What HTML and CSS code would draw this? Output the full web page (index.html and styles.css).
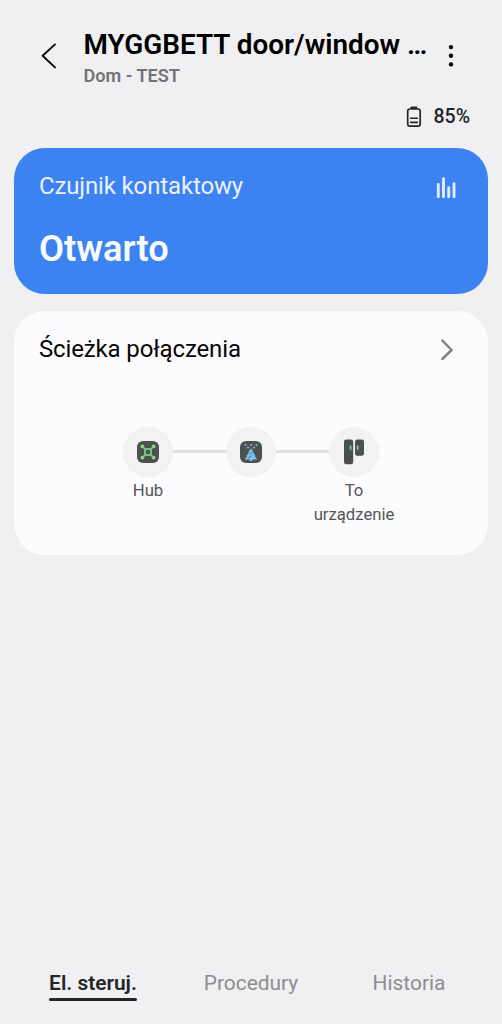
FILE: index.html
```html
<!DOCTYPE html>
<html lang="pl">
<head>
<meta charset="utf-8">
<title>MYGGBETT</title>
<link rel="stylesheet" href="styles.css">
</head>
<body>
<div class="screen">
  <header class="header">
    <svg class="back" width="16" height="28" viewBox="0 0 16 28" fill="none" stroke="#080808" stroke-width="1.9" stroke-linecap="round" stroke-linejoin="round"><path d="M14 2.4 1.6 13.8 14 25.4"/></svg>
    <div class="heading">
      <h1 class="title">MYGGBETT door/window …</h1>
      <div class="subtitle">Dom - TEST</div>
    </div>
    <svg class="more" width="6" height="24" viewBox="0 0 6 24" fill="#0a0a0a"><circle cx="3" cy="3.1" r="2.2"/><circle cx="3" cy="11.8" r="2.2"/><circle cx="3" cy="20.4" r="2.2"/></svg>
  </header>
  <div class="battery">
    <svg width="16" height="22" viewBox="0 0 16 22" fill="none" stroke="#252527"><path d="M5.6 1.8h4.6" stroke-width="2.6" stroke-linecap="round"/><rect x="1.7" y="3" width="12.5" height="17.2" rx="2.2" stroke-width="1.7"/><path d="M4.6 12.2h6.8M4.6 16.4h6.8" stroke-width="1.6" stroke-linecap="round"/></svg>
    <span>85%</span>
  </div>
  <section class="card status">
    <div class="row">
      <h2 class="card-title">Czujnik kontaktowy</h2>
      <svg class="bars" width="20" height="22" viewBox="0 0 20 22" fill="none" stroke="#e1ecfd" stroke-width="2.9" stroke-linecap="round"><path d="M2.3 7.4V19.8M7.5 1.8V19.8M12.7 10.6V19.8M18 6.8V19.8"/></svg>
    </div>
    <div class="state">Otwarto</div>
  </section>
  <section class="card route">
    <div class="row">
      <h2 class="card-title">Ścieżka połączenia</h2>
      <svg class="chevron" width="14" height="22" viewBox="0 0 14 22" fill="none" stroke="#858587" stroke-width="2.5" stroke-linecap="round" stroke-linejoin="round"><path d="M2.4 1.6 11.6 11 2.4 20"/></svg>
    </div>
    <div class="path">
      <div class="node">
        <div class="disc"><svg width="22" height="22" viewBox="0 0 22 22"><rect width="22" height="22" rx="6" fill="#4d5152"/><g fill="none" stroke="#83d58b" stroke-width="1.5"><circle cx="11" cy="11" r="3.2"/><path d="m5.5 5.5 3.2 3.2m4.6 4.6 3.2 3.2m0-11-3.2 3.2m-4.6 4.6-3.2 3.2"/></g><g fill="#83d58b"><circle cx="5.4" cy="5.4" r="1.9"/><circle cx="16.6" cy="5.4" r="1.9"/><circle cx="5.4" cy="16.6" r="1.9"/><circle cx="16.6" cy="16.6" r="1.9"/></g></svg></div>
        <div class="label">Hub</div>
      </div>
      <div class="link"></div>
      <div class="node">
        <div class="disc"><svg width="22" height="22" viewBox="0 0 22 22"><rect width="22" height="22" rx="6" fill="#4d5152"/><path d="m11 7.2 2.8 4.2-.6.4 2.4 3.2-.7.3 2.2 3.2h-4.8v1.6H9.7v-1.6H4.9l2.2-3.2-.7-.3 2.4-3.2-.6-.4z" fill="#74c7ef"/><path d="m9.2 13.2 3.6-2.2M8 17l4.6-2.6" stroke="#4d5152" stroke-width=".6"/><g fill="#82bcdc"><circle cx="5.5" cy="4.1" r="1"/><circle cx="11" cy="3.9" r="1"/><circle cx="16.5" cy="4.1" r="1"/><circle cx="8" cy="6.6" r="1"/><circle cx="14" cy="6.6" r="1"/></g></svg></div>
      </div>
      <div class="link"></div>
      <div class="node">
        <div class="disc"><svg width="20" height="26" viewBox="0 0 20 26"><rect x="0" y=".6" width="9.2" height="24.6" rx="2.2" fill="#4b4f50"/><rect x="11" y=".6" width="9" height="16.2" rx="2.2" fill="#4b4f50"/><path d="M6.6 6.6v4.2M13.6 6.6v4.2" stroke="#86ce8a" stroke-width="1.7"/></svg></div>
        <div class="label">To<br>urządzenie</div>
      </div>
    </div>
  </section>
  <nav class="tabs">
    <span class="tab active">El. steruj.</span>
    <span class="tab">Procedury</span>
    <span class="tab">Historia</span>
  </nav>
</div>
</body>
</html>
```
FILE: styles.css
```css
* { box-sizing: border-box; }
body {
  margin: 0;
  background: #f0f0f3;
  font-family: Roboto, "Liberation Sans", sans-serif;
  color: #050505;
}
h1, h2 { margin: 0; }
svg { display: block; flex: none; }
.screen {
  width: 502px;
  height: 1024px;
  padding: 27px 14px 0;
  display: flex;
  flex-direction: column;
}
.header {
  display: flex;
  align-items: flex-start;
  height: 78px;
  padding: 0 34px 0 27px;
}
.back { margin-top: 15px; }
.heading { flex: 1; min-width: 0; padding-left: 26.5px; white-space: nowrap; }
.title { font-size: 27.9px; line-height: 35px; font-weight: 600; color: #000; }
.subtitle { margin-top: 2px; font-size: 18.1px; line-height: 23px; font-weight: 600; color: #747477; }
.more { margin-top: 17px; }
.battery {
  display: flex;
  justify-content: flex-end;
  align-items: center;
  gap: 11px;
  height: 24px;
  margin-bottom: 19px;
  padding-right: 18px;
  font-size: 19.5px;
  line-height: 24px;
  font-weight: 500;
  color: #252527;
}
.card { border-radius: 31px; padding: 23px 25px 0; }
.row { display: flex; justify-content: space-between; }
.card-title { font-size: 24px; line-height: 30px; font-weight: 400; letter-spacing: -0.14px; white-space: nowrap; }
.status { height: 146px; background: #3c82f1; color: #f7faff; }
.status .card-title { color: #e9f1fd; }
.bars { margin: 6px 7px 0 0; }
.state { margin-top: 26px; font-size: 36.3px; line-height: 44px; font-weight: 600; }
.route { height: 244px; margin-top: 17px; background: #fcfcfe; }
.chevron { margin: 5px 9px 0 0; }
.path { display: flex; justify-content: center; margin-top: 62.5px; }
.node { width: 50px; display: flex; flex-direction: column; align-items: center; }
.disc {
  display: flex;
  align-items: center;
  justify-content: center;
  width: 50px;
  height: 50px;
  border-radius: 50%;
  background: #f2f2f2;
}
.label { margin-top: 2.5px; font-size: 16.7px; line-height: 24px; text-align: center; color: #555558; }
.link { width: 53px; height: 3px; margin-top: 23.5px; background: #e0e0e2; }
.tabs {
  display: grid;
  grid-template-columns: repeat(3, 1fr);
  justify-items: center;
  margin-top: auto;
  height: 54px;
  font-size: 20.9px;
  line-height: 26px;
  color: #8d8d90;
}
.tab { height: 31px; }
.active { font-weight: 600; color: #252628; }
.active::after {
  content: "";
  display: block;
  height: 3px;
  margin-top: 2px;
  border-radius: 1.5px;
  background: #252628;
}
```
